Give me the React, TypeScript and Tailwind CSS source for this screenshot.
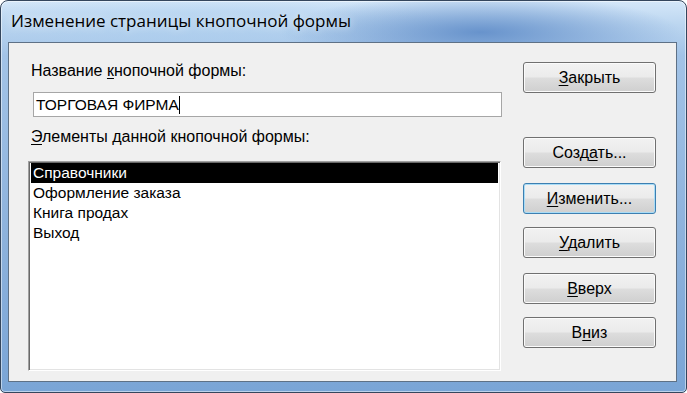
import React from 'react';

const items = ['Справочники', 'Оформление заказа', 'Книга продах', 'Выход'];

function Btn({ pre, u, post, focused }: { pre: string; u: string; post: string; focused?: boolean }) {
  return (
    <button
      className={
        'w-[133px] h-[31px] rounded-[3px] border text-[16px] leading-none flex items-center justify-center ' +
        'bg-[linear-gradient(#f2f2f2_0%,#ebebeb_48%,#dddddd_52%,#cfcfcf_100%)] ' +
        (focused
          ? 'border-[#3c7fb1] shadow-[inset_0_0_0_1px_#a9dcf6]'
          : 'border-[#707070] shadow-[inset_0_0_0_1px_#fbfbfb]')
      }
    >
      <span>
        {pre}
        <span className="underline underline-offset-2">{u}</span>
        {post}
      </span>
    </button>
  );
}

export default function App() {
  return (
    <div className="w-[687px] h-[393px] font-['Liberation_Sans',Arial,sans-serif] text-[16px] text-black">
      <div className="w-full h-full flex flex-col overflow-hidden rounded-t-[8px] rounded-b-[5px] border border-[#34465d] shadow-[inset_0_0_0_1px_rgba(255,255,255,0.5)] bg-[radial-gradient(ellipse_200px_38px_at_70%_8%,rgba(95,140,200,0.9),transparent),radial-gradient(ellipse_260px_30px_at_28%_6%,rgba(170,205,238,0.7),transparent),linear-gradient(#d4e7f9_0%,#bcd6f0_6%,#a2c3e7_14%,#8db2dc_60%,#7aa5d6_100%)]">
        {/* Title bar */}
        <div className="h-[41px] shrink-0 flex items-center pl-[10px] pb-[1px]">
          <span className="font-['Open_Sans',sans-serif] text-[17px] text-black [text-shadow:0_0_8px_rgba(255,255,255,0.9)]">
            Изменение страницы кнопочной формы
          </span>
        </div>

        {/* Client area */}
        <div className="flex-1 ml-[7px] mr-[9px] mb-[10px] bg-[#f0f0f0] border border-[#5e7186] flex">
          <div className="pl-[19px] pt-[18px] flex flex-col">
            <div className="h-[20px] leading-[20px] pl-[3px]">
              Название <span className="underline underline-offset-2">к</span>нопочной формы:
            </div>
            <div className="mt-[11px] ml-[5px] w-[469px] h-[25px] bg-white border border-[#a6a6a6] flex items-center pl-[2px] text-[15.5px]">
              <span>ТОРГОВАЯ ФИРМА</span>
              <span className="w-[1px] h-[18px] bg-black" />
            </div>
            <div className="mt-[10px] h-[20px] leading-[20px] pl-[3px]">
              <span className="underline underline-offset-2">Э</span>лементы данной кнопочной формы:
            </div>
            <div className="mt-[14px] w-[473px] h-[210px] bg-white border border-t-[#a0a0a0] border-l-[#a0a0a0] border-r-[#ffffff] border-b-[#ffffff] shadow-[inset_1px_1px_0_#696969,inset_-1px_-1px_0_#e3e3e3] p-[2px] pt-[1px] text-[15.5px]">
              {items.map((it, i) => (
                <div
                  key={it}
                  className={
                    'h-[20px] leading-[20px] pl-[2px] ' + (i === 0 ? 'bg-black text-white' : '')
                  }
                >
                  {it}
                </div>
              ))}
            </div>
          </div>

          <div className="ml-[21px] pt-[19px] flex flex-col">
            <Btn pre="" u="З" post="акрыть" />
            <div className="mt-[44px]">
              <Btn pre="Созд" u="а" post="ть..." />
            </div>
            <div className="mt-[15px]">
              <Btn pre="" u="И" post="зменить..." focused />
            </div>
            <div className="mt-[13px]">
              <Btn pre="" u="У" post="далить" />
            </div>
            <div className="mt-[15px]">
              <Btn pre="" u="В" post="верх" />
            </div>
            <div className="mt-[13px]">
              <Btn pre="В" u="н" post="из" />
            </div>
          </div>
        </div>
      </div>
    </div>
  );
}
